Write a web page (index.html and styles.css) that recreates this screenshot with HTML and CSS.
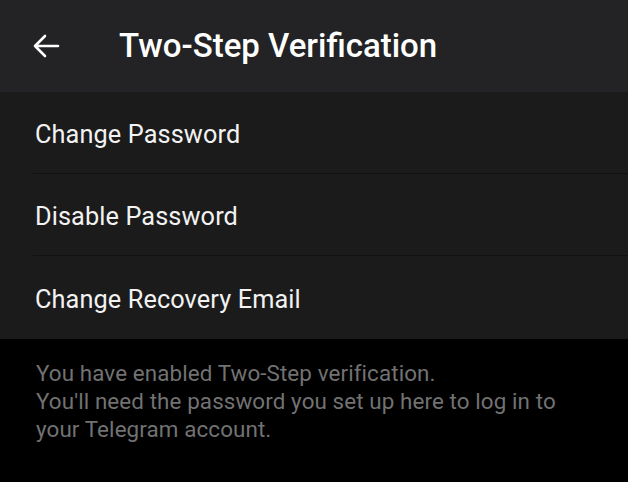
FILE: index.html
```html
<!DOCTYPE html>
<html lang="en">
<head>
  <meta charset="UTF-8" />
  <title>Two-Step Verification</title>
  <link rel="stylesheet" href="styles.css">
</head>
<body>
  <div class="screen">
    <div class="topbar">
      <button class="back" aria-label="Back">
        <svg width="28" height="28" viewBox="0 0 28 28">
          <path d="M26 14H3M13 4L3 14l10 10" fill="none" stroke="#fff" stroke-width="2.6" stroke-linecap="round" stroke-linejoin="round"/>
        </svg>
      </button>
      <div class="title">Two-Step Verification</div>
    </div>
    <div class="list">
      <div class="row">Change Password</div>
      <div class="row">Disable Password</div>
      <div class="row">Change Recovery Email</div>
    </div>
    <div class="info">
      You have enabled Two-Step verification.<br>
      You'll need the password you set up here to log in to your Telegram account.
    </div>
  </div>
</body>
</html>
```

FILE: styles.css
```css
* { box-sizing: border-box; }
html, body {
  margin: 0;
  padding: 0;
  height: 100%;
  background: #000;
}
.screen {
  width: 628px;
  height: 482px;
  display: flex;
  flex-direction: column;
  font-family: Roboto, "Noto Sans", sans-serif;
}
.topbar {
  height: 92px;
  background: #232325;
  display: flex;
  align-items: center;
  padding-left: 32px;
}
.back {
  border: none;
  background: none;
  padding: 0;
  width: 28px;
  height: 28px;
  margin-right: 59px;
  display: flex;
}
.title {
  color: #fff;
  font-size: 33px;
  font-weight: 500;
  margin-top: -2px;
}
.list {
  background: #1b1b1b;
}
.row {
  height: 82px;
  margin-left: 33px;
  padding-left: 2px;
  padding-top: 4px;
  display: flex;
  align-items: center;
  color: #f2f2f2;
  font-size: 25.3px;
  letter-spacing: 0.1px;
  border-bottom: 1px solid #111;
}
.row:last-child {
  border-bottom: none;
  height: 83px;
}
.info {
  width: 575px;
  padding: 20px 0 0 36px;
  color: #727272;
  font-size: 22.4px;
  letter-spacing: 0.1px;
  line-height: 28px;
}
```
